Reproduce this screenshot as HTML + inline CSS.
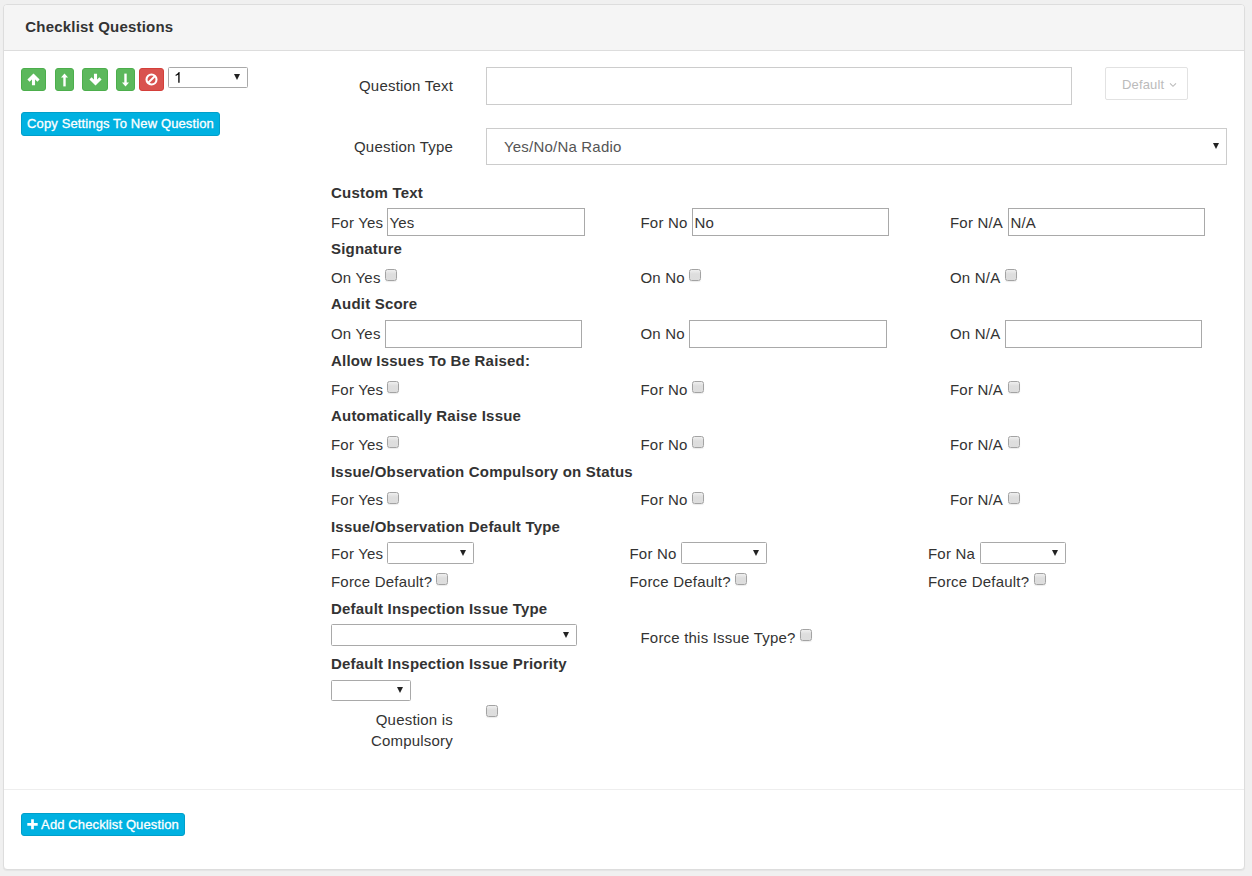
<!DOCTYPE html>
<html>
<head>
<meta charset="utf-8">
<title>Checklist Questions</title>
<style>
*{box-sizing:border-box;}
html,body{margin:0;padding:0;}
body{width:1252px;height:876px;background:#f0f0f0;font-family:"Liberation Sans",sans-serif;font-size:15px;color:#333;position:relative;overflow:hidden;}
.panel{position:absolute;left:3px;top:4px;width:1242px;height:866px;background:#fff;border:1px solid #ddd;border-radius:4px;box-shadow:0 1px 1px rgba(0,0,0,.05);}
.panel-heading{position:absolute;left:0;top:0;width:1240px;height:46px;background:#f5f5f5;border-bottom:1px solid #ddd;border-radius:3px 3px 0 0;}
.panel-title{position:absolute;left:21.3px;top:12px;font-size:15px;font-weight:bold;line-height:20px;color:#333;letter-spacing:0.2px;white-space:nowrap;}
.t{position:absolute;white-space:nowrap;line-height:20px;letter-spacing:0.2px;}
.t.b{font-weight:bold;letter-spacing:0.2px;}
.btn{position:absolute;height:23px;border:1px solid;border-radius:3px;display:flex;align-items:center;justify-content:center;}
.btn.g{background:#5cb85c;border-color:#4cae4c;}
.btn.r{background:#d9534f;border-color:#d43f3a;}
.btn-i{position:absolute;height:24px;background:#00b1e1;border:1px solid #009fca;border-radius:3px;color:#fff;font-size:13px;line-height:20px;padding:1px 5px;white-space:nowrap;letter-spacing:0.12px;text-align:center;-webkit-text-stroke:0.3px #fff;}
.inp{position:absolute;background:#fff;border:1px solid #a9a9a9;font-size:15px;line-height:20px;padding:4px 0 0 1.4px;letter-spacing:0.2px;white-space:nowrap;}
.fc{position:absolute;background:#fff;border:1px solid #ccc;}
.dflt{position:absolute;background:#fff;border:1px solid #e2e2e2;border-radius:2px;color:#bbb;font-size:13px;line-height:31px;padding:1px 0 0 16px;white-space:nowrap;letter-spacing:0.15px;}
.dflt svg{margin-left:5px;vertical-align:1px;}
.sel{position:absolute;background:#fff;border:1px solid #a9a9a9;border-radius:1.5px;}
.arr{position:absolute;right:7px;top:7px;width:0;height:0;border-left:3.2px solid transparent;border-right:3.2px solid transparent;border-top:6px solid #222;}
.one{position:absolute;left:4.5px;top:4.2px;}
.cb{position:absolute;width:12px;height:12px;border:1px solid #a3a3a3;border-radius:2.5px;background:linear-gradient(#efefef,#dedede 40%,#dddddd);box-shadow:0 1px 1px rgba(0,0,0,.08);}
.hr{position:absolute;left:0;width:1240px;height:1px;background:#eee;}
</style>
</head>
<body>
<div class="panel">
  <div class="panel-heading"><div class="panel-title">Checklist Questions</div></div>
  <div class="btn g" style="left:17px;top:63px;width:25px;"><svg width="13" height="13" viewBox="0 0 13 13"><path d="M6.5 12.2V3M1.5 7.7L6.5 2.7L11.5 7.7" fill="none" stroke="#fff" stroke-width="3.1" stroke-linejoin="miter"/></svg></div>
  <div class="btn g" style="left:51px;top:63px;width:19px;"><svg width="7" height="14" viewBox="0 0 7 14"><path d="M3.5 0.4L7 4.6H0Z" fill="#fff"/><rect x="2.3" y="4" width="2.4" height="9.4" fill="#fff"/></svg></div>
  <div class="btn g" style="left:78px;top:63px;width:26px;"><svg width="13" height="13" viewBox="0 0 13 13"><path d="M6.5 0.8V10M1.5 5.3L6.5 10.3L11.5 5.3" fill="none" stroke="#fff" stroke-width="3.1" stroke-linejoin="miter"/></svg></div>
  <div class="btn g" style="left:112px;top:63px;width:19px;"><svg width="7" height="14" viewBox="0 0 7 14"><path d="M3.5 13.6L7 9.4H0Z" fill="#fff"/><rect x="2.3" y="0.6" width="2.4" height="9.4" fill="#fff"/></svg></div>
  <div class="btn r" style="left:135px;top:63px;width:25px;"><svg width="13" height="13" viewBox="0 0 13 13"><circle cx="6.5" cy="6.5" r="5" fill="none" stroke="#fff" stroke-width="2.1"/><path d="M3 10L10 3" stroke="#fff" stroke-width="2"/></svg></div>
  <div class="sel" style="left:164px;top:62px;width:80px;height:21px;"><svg class="one" width="8.34" height="11" viewBox="0 -1472 1139 1502"><path transform="scale(1,-1)" d="M763 0H583V1147Q518 1085 412.500 1023Q307 961 223 930V1104Q374 1175 487 1276Q600 1377 647 1472H763Z" fill="#000"/></svg><i class="arr" style="top:6px;"></i></div>
  <div class="btn-i" style="left:17px;top:107px;width:199px;">Copy Settings To New Question</div>
  <div class="t " style="left:355px;top:71px;">Question Text</div>
  <div class="fc" style="left:482px;top:62px;width:586px;height:38px;"></div>
  <div class="dflt" style="left:1101px;top:62px;width:83px;height:33px;"><span>Default</span><svg width="8" height="6" viewBox="0 0 8 6"><path d="M1 1.3L4 4.3L7 1.3" fill="none" stroke="#bbb" stroke-width="1.1"/></svg></div>
  <div class="t " style="left:350px;top:132px;">Question Type</div>
  <div class="fc" style="left:482px;top:123px;width:741px;height:37px;"><span class="t" style="left:17px;top:8px;color:#555;">Yes/No/Na Radio</span><i class="arr" style="right:7px;top:14px;"></i></div>
  <div class="t b" style="left:327px;top:178px;">Custom Text</div>
  <div class="t " style="left:327px;top:208px;">For Yes</div>
  <div class="inp" style="left:383px;top:203px;width:198px;height:28px;">Yes</div>
  <div class="t " style="left:636.5px;top:208px;">For No</div>
  <div class="inp" style="left:688px;top:203px;width:197px;height:28px;">No</div>
  <div class="t " style="left:946px;top:208px;">For N/A</div>
  <div class="inp" style="left:1004px;top:203px;width:197px;height:28px;">N/A</div>
  <div class="t b" style="left:327px;top:234px;">Signature</div>
  <div class="t " style="left:327px;top:263px;">On Yes</div>
  <div class="cb" style="left:381px;top:264px;"></div>
  <div class="t " style="left:636.5px;top:263px;">On No</div>
  <div class="cb" style="left:685px;top:264px;"></div>
  <div class="t " style="left:946px;top:263px;">On N/A</div>
  <div class="cb" style="left:1001px;top:264px;"></div>
  <div class="t b" style="left:327px;top:289px;">Audit Score</div>
  <div class="t " style="left:327px;top:319px;">On Yes</div>
  <div class="inp" style="left:381px;top:315px;width:197px;height:28px;"></div>
  <div class="t " style="left:636.5px;top:319px;">On No</div>
  <div class="inp" style="left:685px;top:315px;width:198px;height:28px;"></div>
  <div class="t " style="left:946px;top:319px;">On N/A</div>
  <div class="inp" style="left:1001px;top:315px;width:197px;height:28px;"></div>
  <div class="t b" style="left:327px;top:346px;">Allow Issues To Be Raised:</div>
  <div class="t " style="left:327px;top:375px;">For Yes</div>
  <div class="cb" style="left:383px;top:376px;"></div>
  <div class="t " style="left:636.5px;top:375px;">For No</div>
  <div class="cb" style="left:688px;top:376px;"></div>
  <div class="t " style="left:946px;top:375px;">For N/A</div>
  <div class="cb" style="left:1004px;top:376px;"></div>
  <div class="t b" style="left:327px;top:401px;">Automatically Raise Issue</div>
  <div class="t " style="left:327px;top:430px;">For Yes</div>
  <div class="cb" style="left:383px;top:431px;"></div>
  <div class="t " style="left:636.5px;top:430px;">For No</div>
  <div class="cb" style="left:688px;top:431px;"></div>
  <div class="t " style="left:946px;top:430px;">For N/A</div>
  <div class="cb" style="left:1004px;top:431px;"></div>
  <div class="t b" style="left:327px;top:457px;">Issue/Observation Compulsory on Status</div>
  <div class="t " style="left:327px;top:485px;">For Yes</div>
  <div class="cb" style="left:383px;top:487px;"></div>
  <div class="t " style="left:636.5px;top:485px;">For No</div>
  <div class="cb" style="left:688px;top:487px;"></div>
  <div class="t " style="left:946px;top:485px;">For N/A</div>
  <div class="cb" style="left:1004px;top:487px;"></div>
  <div class="t b" style="left:327px;top:512px;">Issue/Observation Default Type</div>
  <div class="t " style="left:327px;top:539px;">For Yes</div>
  <div class="sel" style="left:383px;top:537px;width:87px;height:22px;"><i class="arr" style="top:7px;"></i></div>
  <div class="t " style="left:625.5px;top:539px;">For No</div>
  <div class="sel" style="left:677px;top:537px;width:86px;height:22px;"><i class="arr" style="top:7px;"></i></div>
  <div class="t " style="left:924px;top:539px;">For Na</div>
  <div class="sel" style="left:976px;top:537px;width:86px;height:22px;"><i class="arr" style="top:7px;"></i></div>
  <div class="t " style="left:327px;top:567px;">Force Default?</div>
  <div class="cb" style="left:432px;top:568px;"></div>
  <div class="t " style="left:625.5px;top:567px;">Force Default?</div>
  <div class="cb" style="left:731px;top:568px;"></div>
  <div class="t " style="left:924px;top:567px;">Force Default?</div>
  <div class="cb" style="left:1030px;top:568px;"></div>
  <div class="t b" style="left:327px;top:594px;">Default Inspection Issue Type</div>
  <div class="sel" style="left:327px;top:619px;width:246px;height:22px;"><i class="arr" style="top:7px;"></i></div>
  <div class="t " style="left:636.5px;top:623px;">Force this Issue Type?</div>
  <div class="cb" style="left:796px;top:624px;"></div>
  <div class="t b" style="left:327px;top:649px;">Default Inspection Issue Priority</div>
  <div class="sel" style="left:327px;top:675px;width:80px;height:21px;"><i class="arr" style="top:6px;"></i></div>
  <div class="t" style="left:327px;top:704px;width:122px;text-align:right;white-space:normal;line-height:21px;">Question is Compulsory</div>
  <div class="cb" style="left:482px;top:700px;"></div>
  <div class="hr" style="top:784px;"></div>
  <div class="btn-i" style="left:17px;top:808px;width:164px;height:23px;line-height:19px;letter-spacing:0.12px;"><svg width="11" height="11" viewBox="0 0 11 11" style="vertical-align:-1px;margin-right:3px;"><path d="M5.5 0.3V10.3M0.3 5.3H10.7" stroke="#fff" stroke-width="2.7"/></svg>Add Checklist Question</div>
</div>
</body>
</html>
